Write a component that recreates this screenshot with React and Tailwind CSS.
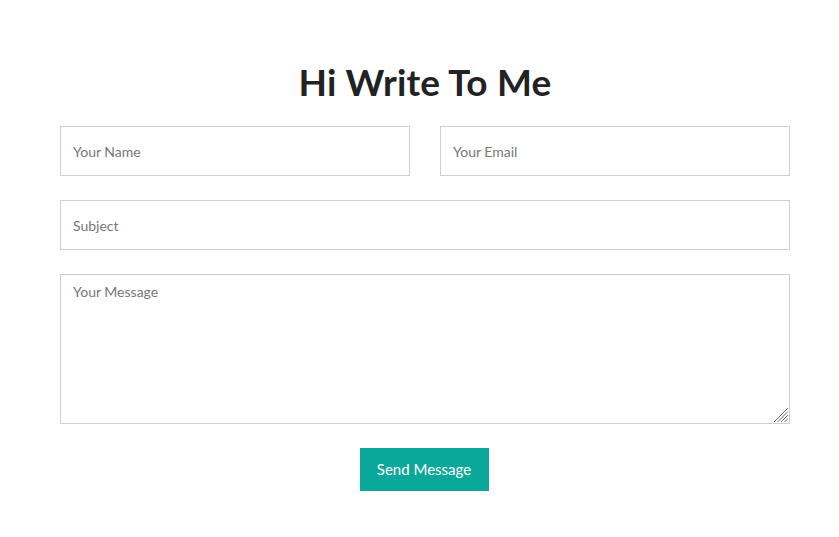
import React from "react";

export default function App() {
  const font = { fontFamily: "Lato, 'Open Sans', sans-serif" };
  const field =
    "h-[50px] border border-[#cfcfcf] px-[12px] text-[14px] text-[#444] placeholder:text-[#777] outline-none";
  return (
    <div className="w-[839px] h-[537px] bg-white" style={font}>
      <div className="ml-[60px] w-[730px] pt-[61px] flex flex-col">
        <h1 className="text-center text-[37px] leading-[42px] font-bold text-[#222] tracking-[0.2px]">Hi Write To Me</h1>
        <div className="mt-[23px] flex gap-[30px]">
          <input placeholder="Your Name" className={"w-[350px] " + field} />
          <input placeholder="Your Email" className={"w-[350px] " + field} />
        </div>
        <input placeholder="Subject" className={"mt-[24px] w-[730px] " + field} />
        <div className="relative mt-[24px] w-[730px] h-[150px]">
          <textarea
            placeholder="Your Message"
            className="w-[730px] h-[150px] border border-[#cfcfcf] px-[12px] py-[6px] text-[14px] text-[#444] placeholder:text-[#777] outline-none block resize-none"
          />
          <svg className="absolute right-[2px] bottom-[2px]" width="15" height="15" viewBox="0 0 15 15">
            <g stroke="#6b6b6b" strokeWidth="1">
              <line x1="1" y1="15" x2="15" y2="1" />
              <line x1="4.5" y1="15" x2="15" y2="4.5" />
              <line x1="8" y1="15" x2="15" y2="8" />
              <line x1="11.5" y1="15" x2="15" y2="11.5" />
            </g>
          </svg>
        </div>
        <div className="mt-[24px] flex justify-center">
          <button className="w-[129px] h-[43px] bg-[#0aa89b] text-white text-[15px] -translate-x-[1px]">Send Message</button>
        </div>
      </div>
    </div>
  );
}
